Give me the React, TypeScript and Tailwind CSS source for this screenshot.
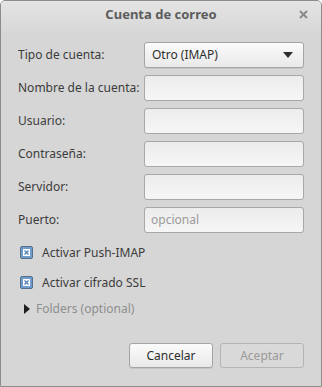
import React from 'react'

const rows = [
  { label: 'Nombre de la cuenta:', placeholder: '' },
  { label: 'Usuario:', placeholder: '' },
  { label: 'Contraseña:', placeholder: '' },
  { label: 'Servidor:', placeholder: '' },
  { label: 'Puerto:', placeholder: 'opcional' },
]

function Check({ label }: { label: string }) {
  return (
    <div className="flex items-center h-[13px]">
      <div className="w-[13px] h-[13px] rounded-[2px] border border-[#55708c] bg-[#6f9ccb] flex items-center justify-center">
        <svg width="7" height="7" viewBox="0 0 7 7">
          <rect x="0" y="0" width="7" height="7" fill="#ffffff" />
          <path d="M1.5 1.5 L5.5 5.5 M5.5 1.5 L1.5 5.5" stroke="#4d7fb3" strokeWidth="1.3" />
        </svg>
      </div>
      <span className="ml-[9px] text-[#3c3c3c]">{label}</span>
    </div>
  )
}

export default function App() {
  return (
    <div
      className="w-[322px] h-[387px] bg-[#d6d6d6] border border-[#8c8c8c] rounded-t-[5px] flex flex-col text-[12px] text-[#3c3c3c] overflow-hidden"
      style={{ fontFamily: '"Noto Sans", "Open Sans", sans-serif' }}
    >
      <div className="h-[30px] shrink-0 bg-gradient-to-b from-[#e4e4e4] to-[#d8d8d8] relative flex items-center justify-center">
        <span className="font-bold text-[#5c5c5c] text-[13px] -mt-[3px]">Cuenta de correo</span>
        <svg className="absolute right-[13px] top-[9px]" width="9" height="9" viewBox="0 0 9 9">
          <path d="M1 1 L8 8 M8 1 L1 8" stroke="#8a8a8a" strokeWidth="2" />
        </svg>
      </div>

      <div className="pl-[17px] pr-[17px] pt-[11px] flex flex-col">
        <div className="flex items-center h-[26px]">
          <span className="w-[126px] shrink-0">Tipo de cuenta:</span>
          <div className="flex-1 h-[26px] rounded-[3px] border border-[#a4a4a4] bg-gradient-to-b from-[#fbfbfb] to-[#e9e9e9] shadow-[0_1px_0_rgba(0,0,0,0.08)] flex items-center justify-between pl-[7px] pr-[10px]">
            <span className="text-[#2e2e2e]">Otro (IMAP)</span>
            <svg width="10" height="6" viewBox="0 0 10 6">
              <path d="M0 0 L10 0 L5 6 Z" fill="#2e2e2e" />
            </svg>
          </div>
        </div>

        {rows.map((r) => (
          <div key={r.label} className="flex items-center h-[26px] mt-[7px]">
            <span className="w-[126px] shrink-0 whitespace-nowrap">{r.label}</span>
            <div className="flex-1 h-[26px] rounded-[3px] border border-[#a8a8a8] bg-gradient-to-b from-[#ececec] to-[#f6f6f6] flex items-center pl-[6px]">
              <span className="text-[#9a9a9a]">{r.placeholder}</span>
            </div>
          </div>
        ))}

        <div className="mt-[13px] pl-[2px] flex flex-col gap-[17px]">
          <Check label="Activar Push-IMAP" />
          <Check label="Activar cifrado SSL" />
        </div>

        <div className="mt-[13px] flex items-center pl-[6px] h-[14px]">
          <svg width="6" height="10" viewBox="0 0 6 10">
            <path d="M0 0 L6 5 L0 10 Z" fill="#1e1e1e" />
          </svg>
          <span className="ml-[6px] text-[#8e8e8e]">Folders (optional)</span>
        </div>
      </div>

      <div className="mt-auto flex justify-end gap-[7px] pr-[17px] pb-[18px]">
        <div className="w-[84px] h-[25px] rounded-[3px] border border-[#a4a4a4] bg-gradient-to-b from-[#fbfbfb] to-[#e9e9e9] shadow-[0_1px_0_rgba(0,0,0,0.08)] flex items-center justify-center text-[#2e2e2e]">
          Cancelar
        </div>
        <div className="w-[84px] h-[25px] rounded-[3px] border border-[#b4b4b4] bg-[#d9d9d9] flex items-center justify-center text-[#9a9a9a]">
          Aceptar
        </div>
      </div>
    </div>
  )
}
